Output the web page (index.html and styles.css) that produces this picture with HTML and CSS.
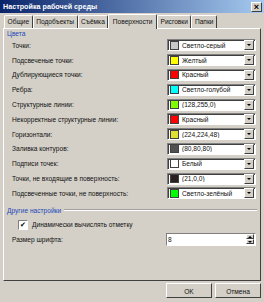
FILE: index.html
```html
<!DOCTYPE html>
<html>
<head>
<title>Настройка рабочей среды</title>
<link rel="stylesheet" href="styles.css">
</head>
<body>

    <div class="window">

        <div class="titlebar">
            <span class="title">Настройка рабочей среды</span>
            <span class="close">&times;</span>
        </div>

        <div class="tabs">
            <div class="tab">Общие</div>
            <div class="tab">Подобъекты</div>
            <div class="tab">Съёмка</div>
            <div class="tab active">Поверхности</div>
            <div class="tab">Рисговки</div>
            <div class="tab">Папки</div>
        </div>

        <div class="panel">

            <div class="group-title">Цвета</div>

            <div class="rows">
                <div class="row">
                    <span class="label">Точки:</span>
                    <div class="combo"><span class="swatch sw-silver"></span><span class="ctext">Светло-серый</span><span class="drop"></span></div>
                </div>
                <div class="row">
                    <span class="label">Подсвеченые точки:</span>
                    <div class="combo"><span class="swatch sw-yellow"></span><span class="ctext">Желтый</span><span class="drop"></span></div>
                </div>
                <div class="row">
                    <span class="label">Дублирующиеся точки:</span>
                    <div class="combo"><span class="swatch sw-red"></span><span class="ctext">Красный</span><span class="drop"></span></div>
                </div>
                <div class="row">
                    <span class="label">Ребра:</span>
                    <div class="combo"><span class="swatch sw-cyan"></span><span class="ctext">Светло-голубой</span><span class="drop"></span></div>
                </div>
                <div class="row">
                    <span class="label">Структурные линии:</span>
                    <div class="combo"><span class="swatch sw-lime"></span><span class="ctext">(128,255,0)</span><span class="drop"></span></div>
                </div>
                <div class="row">
                    <span class="label">Некорректные структурные линии:</span>
                    <div class="combo"><span class="swatch sw-red"></span><span class="ctext">Красный</span><span class="drop"></span></div>
                </div>
                <div class="row">
                    <span class="label">Горизонтали:</span>
                    <div class="combo"><span class="swatch sw-olive"></span><span class="ctext">(224,224,48)</span><span class="drop"></span></div>
                </div>
                <div class="row">
                    <span class="label">Заливка контуров:</span>
                    <div class="combo"><span class="swatch sw-gray"></span><span class="ctext">(80,80,80)</span><span class="drop"></span></div>
                </div>
                <div class="row">
                    <span class="label">Подписи точек:</span>
                    <div class="combo"><span class="swatch sw-white"></span><span class="ctext">Белый</span><span class="drop"></span></div>
                </div>
                <div class="row">
                    <span class="label">Точки, не входящие в поверхность:</span>
                    <div class="combo"><span class="swatch sw-dark"></span><span class="ctext">(21,0,0)</span><span class="drop"></span></div>
                </div>
                <div class="row">
                    <span class="label">Подсвеченные точки, не поверхность:</span>
                    <div class="combo"><span class="swatch sw-green"></span><span class="ctext">Светло-зелёный</span><span class="drop"></span></div>
                </div>
            </div>

            <div class="group-title lined"><span>Другие настройки</span></div>

            <div class="check-row">
                <span class="checkbox">&#10004;</span>
                <span>Динамически вычислять отметку</span>
            </div>

            <div class="font-row">
                <span class="label">Размер шрифта:</span>
                <div class="spin">
                    <span class="spin-text">8</span>
                    <span class="spin-btns"><span class="up"></span><span class="down"></span></span>
                </div>
            </div>

        </div>

        <div class="buttons">
            <div class="btn">OK</div>
            <div class="btn">Отмена</div>
        </div>

    </div>

</body>
</html>
```

FILE: styles.css
```css
body {
    margin: 0;
    font-family: "Liberation Sans", Arial, sans-serif;
    font-size: 6.6px;
    color: #111;
}

.window {
    width: 264px;
    height: 302px;
    background: #d4d0c8;
    display: flex;
    flex-direction: column;
    box-sizing: border-box;
}

.titlebar {
    height: 13px;
    background: linear-gradient(to right, #0a246a, #a6caf0);
    display: flex;
    align-items: center;
    justify-content: space-between;
    padding: 0 2px 0 3px;
}

.title {
    color: #fff;
    font-weight: bold;
    font-size: 7.2px;
}

.close {
    width: 9px;
    height: 8px;
    background: #d4d0c8;
    border: 1px solid;
    border-color: #fff #404040 #404040 #fff;
    font-size: 9px;
    line-height: 8px;
    text-align: center;
    font-weight: bold;
    color: #000;
}

.tabs {
    display: flex;
    align-items: flex-end;
    height: 15px;
    padding: 0 0 0 4px;
}

.tab {
    height: 12px;
    line-height: 12px;
    padding: 0 2.5px;
    border: 1px solid;
    border-color: #fff #404040 transparent #fff;
    border-bottom: none;
    border-radius: 2px 2px 0 0;
}

.tab.active {
    height: 14px;
    line-height: 13px;
    position: relative;
    background: #d4d0c8;
    top: 1px;
    z-index: 1;
    padding: 0 3.5px;
}

.panel {
    margin: 0 3px;
    height: 253px;
    border: 1px solid;
    border-color: #fff #404040 #404040 #fff;
    padding: 0 3px;
    box-sizing: border-box;
}

.group-title {
    color: #1c48b8;
    height: 9px;
    line-height: 9px;
}

.group-title.lined {
    display: flex;
    align-items: center;
    gap: 3px;
    margin-top: 5px;
}

.group-title.lined::after {
    content: "";
    flex: 1;
    border-top: 1px solid #a0a0a0;
    border-bottom: 1px solid #fff;
}

.rows {
    display: grid;
    grid-auto-rows: 14.8px;
    padding-left: 5px;
}

.row {
    display: flex;
    align-items: center;
    justify-content: space-between;
}

.combo {
    width: 89px;
    height: 12px;
    background: #fff;
    border: 1px solid;
    border-color: #808080 #fff #fff #808080;
    box-shadow: inset 1px 1px 0 #404040;
    display: flex;
    align-items: center;
    box-sizing: border-box;
    margin-right: 1px;
}

.swatch {
    width: 7px;
    height: 7px;
    border: 1px solid #404040;
    margin: 0 3px 0 2px;
}

.sw-silver { background: #c8c8c8; }
.sw-yellow { background: #ffff00; }
.sw-red { background: #ff0000; }
.sw-cyan { background: #00ffff; }
.sw-lime { background: #80ff00; }
.sw-olive { background: #e0e030; }
.sw-gray { background: #505050; }
.sw-white { background: #ffffff; }
.sw-dark { background: #2a2020; }
.sw-green { background: #00ff00; }

.ctext {
    flex: 1;
    white-space: nowrap;
    overflow: hidden;
}

.drop {
    width: 8px;
    height: 8px;
    background: #d4d0c8;
    border: 1px solid;
    border-color: #fff #404040 #404040 #fff;
    margin-right: 1px;
    position: relative;
}

.drop::after {
    content: "";
    position: absolute;
    left: 2px;
    top: 3px;
    border-left: 2px solid transparent;
    border-right: 2px solid transparent;
    border-top: 2px solid #000;
}

.check-row {
    display: flex;
    align-items: center;
    gap: 4px;
    height: 10px;
    margin: 5px 0 0 11px;
}

.checkbox {
    width: 8px;
    height: 8px;
    background: #fff;
    border: 1px solid;
    border-color: #808080 #fff #fff #808080;
    font-size: 7px;
    line-height: 8px;
    text-align: center;
    color: #000;
}

.font-row {
    display: flex;
    align-items: center;
    justify-content: space-between;
    padding-left: 5px;
    margin-top: 3px;
}

.spin {
    width: 90px;
    height: 13px;
    background: #fff;
    border: 1px solid;
    border-color: #808080 #fff #fff #808080;
    box-sizing: border-box;
    display: flex;
    align-items: center;
    margin-right: 1px;
}

.spin-text {
    flex: 1;
    padding-left: 1px;
}

.spin-btns {
    width: 8px;
    height: 10px;
    display: flex;
    flex-direction: column;
    margin-right: 1px;
}

.spin-btns span {
    flex: 1;
    background: #d4d0c8;
    border: 1px solid;
    border-color: #fff #404040 #404040 #fff;
    position: relative;
}

.up::after, .down::after {
    content: "";
    position: absolute;
    left: 1px;
    border-left: 2px solid transparent;
    border-right: 2px solid transparent;
}

.up::after {
    top: 1px;
    border-bottom: 2px solid #000;
}

.down::after {
    top: 1px;
    border-top: 2px solid #000;
}

.buttons {
    display: flex;
    justify-content: flex-end;
    gap: 3px;
    padding: 2px 3px 0 0;
}

.btn {
    width: 46px;
    height: 15px;
    line-height: 15px;
    text-align: center;
    border: 1px solid;
    border-color: #fff #404040 #404040 #fff;
    box-sizing: border-box;
}
```
